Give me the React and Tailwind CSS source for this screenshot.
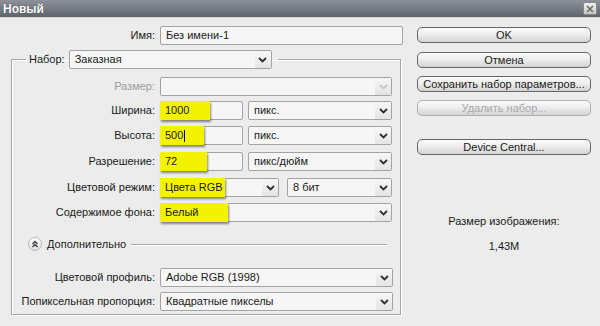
import React from "react";

const Chevron = ({ disabled }) => (
  <svg width="9" height="6" viewBox="0 0 9 6">
    <path d="M1 1 L4.5 4.5 L8 1" fill="none" stroke={disabled ? "#c8c8c8" : "#303030"} strokeWidth="1.8" />
  </svg>
);

function Select({ children, className = "", disabled }) {
  return (
    <div className={`flex items-center h-[19px] border border-[#a3a3a3] bg-[#f6f6f6] rounded-[2px] ${className}`}>
      <div className="flex-1 pl-[5px] truncate leading-[17px]">{children}</div>
      <div className="w-[16px] h-[17px] flex items-center justify-center bg-gradient-to-b from-[#f7f7f7] to-[#e4e4e4]">
        <Chevron disabled={disabled} />
      </div>
    </div>
  );
}

function Input({ children, className = "" }) {
  return (
    <div className={`flex items-center h-[19px] border border-[#a3a3a3] bg-[#f6f6f6] rounded-[2px] ${className}`}>
      {children}
    </div>
  );
}

function Hi({ children, w }) {
  return (
    <div
      className={`-ml-px -my-px h-[19px] flex items-center pl-[5px] bg-[#f3f300] shadow-[1px_2px_2px_rgba(0,0,0,0.45)] ${w}`}
    >
      {children}
    </div>
  );
}

function Label({ children, disabled }) {
  return (
    <span className={`w-[148px] pr-[5px] text-right shrink-0 ${disabled ? "text-[#9c9c9c]" : ""}`}>
      {children}
    </span>
  );
}

function Btn({ children, disabled, className = "" }) {
  return (
    <div
      className={`h-[16px] w-[174px] rounded-[5px] border flex items-center justify-center bg-gradient-to-b from-[#fbfbfb] via-[#ececec] to-[#d3d3d3] ${
        disabled ? "border-[#b0b0b0] text-[#a8a8a8]" : "border-[#666666] text-[#1a1a1a]"
      } ${className}`}
    >
      {children}
    </div>
  );
}

export default function App() {
  return (
    <div className="w-[600px] h-[326px] bg-[#ececec] flex flex-col font-['Liberation_Sans',Arial,sans-serif] text-[11px] text-[#1a1a1a] overflow-hidden">
      {/* title bar */}
      <div className="h-[18px] shrink-0 flex items-center justify-between bg-gradient-to-b from-[#8d929a] to-[#5e646d] border-b border-[#d8d8d8]">
        <span className="pl-[3px] text-white font-bold text-[12px] [text-shadow:0_0_1px_rgba(0,0,0,0.6)]">Новый</span>
        <div className="mr-[3px] w-[14px] h-[13px] rounded-[2px] border border-[#8a8a8a] bg-gradient-to-b from-[#f0f0f0] to-[#c8c8c8] flex items-center justify-center">
          <svg width="8" height="8" viewBox="0 0 8 8">
            <path d="M1 1 L7 7 M7 1 L1 7" stroke="#6a6a6a" strokeWidth="1.6" />
          </svg>
        </div>
      </div>

      <div className="flex flex-1">
        {/* left */}
        <div className="w-[404px] shrink-0 flex flex-col">
          <div className="flex items-center mt-[8px]">
            <span className="w-[160px] pr-[5px] text-right">Имя:</span>
            <Input className="w-[243px] pl-[5px]">Без имени-1</Input>
          </div>

          <fieldset className="ml-[11px] mt-[5px] w-[390px] border border-[#a6a6a6] shadow-[inset_1px_1px_0_#ffffff,1px_1px_0_#ffffff] pb-[3px]">
            <legend className="ml-[14px] px-[3px] pr-[6px]">
              <div className="flex items-center">
                <span className="pr-[4px]">Набор:</span>
                <Select className="w-[203px]">Заказная</Select>
              </div>
            </legend>

            <div className="flex items-center mt-[8px]">
              <Label disabled>Размер:</Label>
              <Select className="w-[232px]" disabled></Select>
            </div>

            <div className="flex items-center mt-[5px]">
              <Label>Ширина:</Label>
              <Input className="w-[83px]">
                <Hi w="w-[50px]">1000</Hi>
              </Input>
              <Select className="ml-[5px] w-[144px]">пикс.</Select>
            </div>

            <div className="flex items-center mt-[6px]">
              <Label>Высота:</Label>
              <Input className="w-[83px]">
                <Hi w="w-[44px]">
                  500<span className="inline-block w-px h-[12px] bg-black ml-px" />
                </Hi>
              </Input>
              <Select className="ml-[5px] w-[144px]">пикс.</Select>
            </div>

            <div className="flex items-center mt-[7px]">
              <Label>Разрешение:</Label>
              <Input className="w-[83px]">
                <Hi w="w-[47px]">72</Hi>
              </Input>
              <Select className="ml-[5px] w-[144px]">пикс/дюйм</Select>
            </div>

            <div className="flex items-center mt-[7px]">
              <Label>Цветовой режим:</Label>
              <div className="w-[119px] flex items-center h-[19px] border border-[#a3a3a3] bg-[#f6f6f6] rounded-[2px]">
                <Hi w="w-[65px]">Цвета RGB</Hi>
                <div className="flex-1" />
                <div className="w-[16px] h-[17px] flex items-center justify-center bg-gradient-to-b from-[#f7f7f7] to-[#e4e4e4]">
                  <Chevron />
                </div>
              </div>
              <Select className="ml-[8px] w-[105px]">8 бит</Select>
            </div>

            <div className="flex items-center mt-[6px]">
              <Label>Содержимое фона:</Label>
              <div className="w-[232px] flex items-center h-[19px] border border-[#a3a3a3] bg-[#f6f6f6] rounded-[2px]">
                <Hi w="w-[68px]">Белый</Hi>
                <div className="flex-1" />
                <div className="w-[16px] h-[17px] flex items-center justify-center bg-gradient-to-b from-[#f7f7f7] to-[#e4e4e4]">
                  <Chevron />
                </div>
              </div>
            </div>

            <div className="flex items-center mt-[14px] h-[16px] pl-[16px]">
              <div className="w-[14px] h-[14px] rounded-full border border-[#b8b8b8] bg-gradient-to-b from-[#ffffff] to-[#dedede] flex items-center justify-center">
                <svg width="8" height="8" viewBox="0 0 8 8">
                  <path d="M1.5 4 L4 1.5 L6.5 4 M1.5 7 L4 4.5 L6.5 7" fill="none" stroke="#333" strokeWidth="1.3" />
                </svg>
              </div>
              <span className="ml-[5px]">Дополнительно</span>
              <div className="ml-[5px] w-[256px] h-px bg-[#a6a6a6] shadow-[0_1px_0_#ffffff]" />
            </div>

            <div className="flex items-center mt-[16px]">
              <Label>Цветовой профиль:</Label>
              <Select className="w-[233px]">Adobe RGB (1998)</Select>
            </div>

            <div className="flex items-center mt-[5px]">
              <Label>Попиксельная пропорция:</Label>
              <Select className="w-[233px]">Квадратные пикселы</Select>
            </div>
          </fieldset>
        </div>

        {/* right */}
        <div className="flex flex-col pl-[13px]">
          <Btn className="mt-[9px]">OK</Btn>
          <Btn className="mt-[9px]">Отмена</Btn>
          <Btn className="mt-[8px]">Сохранить набор параметров...</Btn>
          <Btn className="mt-[8px]" disabled>Удалить набор...</Btn>
          <Btn className="mt-[23px]">Device Central...</Btn>
          <div className="mt-[58px] w-[174px] text-center">Размер изображения:</div>
          <div className="mt-[8px] w-[174px] text-center">1,43M</div>
        </div>
      </div>
    </div>
  );
}
